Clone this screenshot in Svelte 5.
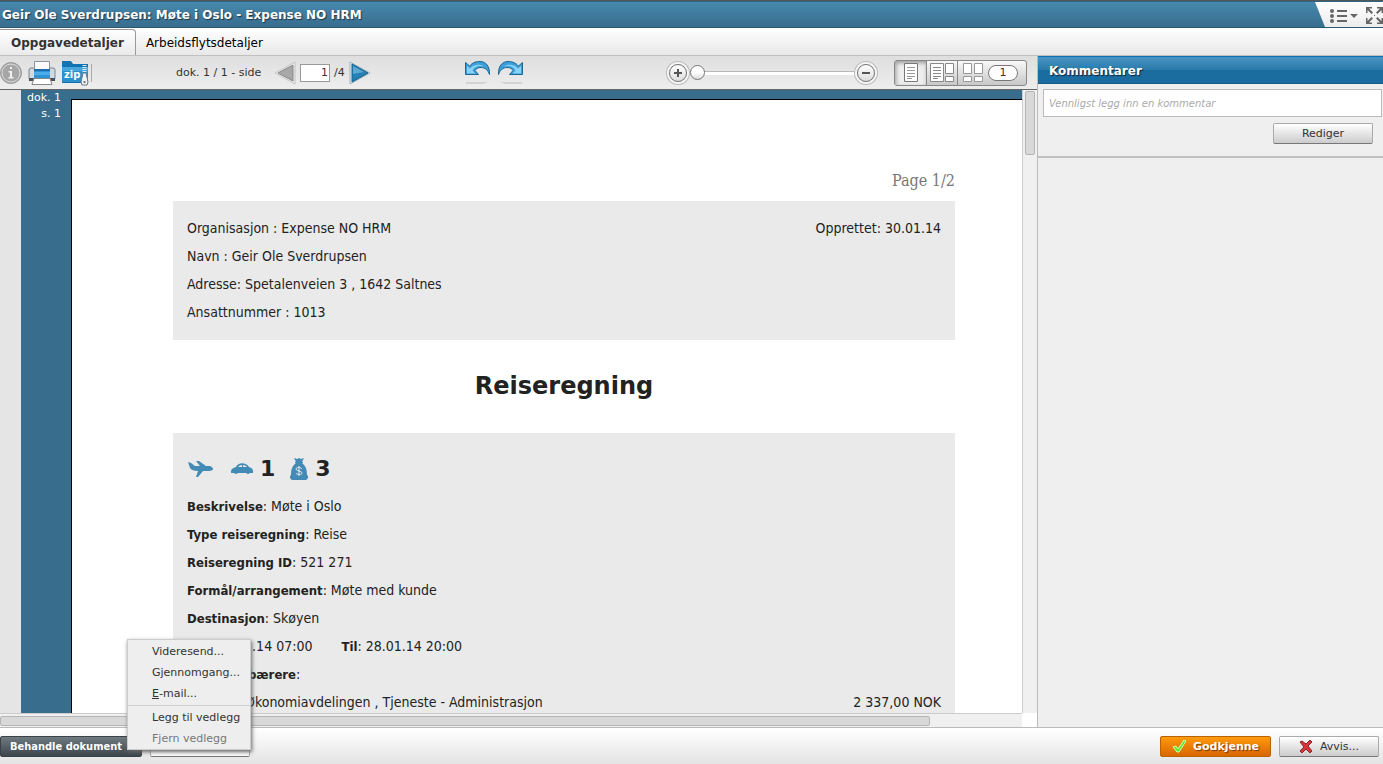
<script lang="ts">
  let page = $state(1);
  let zoom = $state(0);
  let comment = $state("");

  const sender = [
    "Organisasjon : Expense NO HRM",
    "Navn : Geir Ole Sverdrupsen",
    "Adresse: Spetalenveien 3 , 1642 Saltnes",
    "Ansattnummer : 1013",
  ];

  const details = [
    ["Beskrivelse", "Møte i Oslo"],
    ["Type reiseregning", "Reise"],
    ["Reiseregning ID", "521 271"],
    ["Formål/arrangement", "Møte med kunde"],
    ["Destinasjon", "Skøyen"],
  ];
</script>

<div class="app">
  <header class="titlebar">
    <h1>Geir Ole Sverdrupsen: Møte i Oslo - Expense NO HRM</h1>
    <div class="window-tools">
      <button aria-label="Liste">
        <svg width="28" height="16" viewBox="0 0 28 16">
          <g fill="#666">
            <circle cx="2" cy="3" r="2" /><circle cx="2" cy="8" r="2" /><circle cx="2" cy="13" r="2" />
            <path d="M7 2h10v2H7zM7 7h10v2H7zM7 12h10v2H7zM20 6h8l-4 4z" />
          </g>
        </svg>
      </button>
      <button aria-label="Fullskjerm">
        <svg width="17" height="17" viewBox="0 0 17 17" fill="#666">
          <path d="M0 0h6v1.500H3L7 5.500 5.500 7 1.500 3v3H0zM17 0v6h-1.500V3l-4 4L10 5.500l4-4h-3V0zM17 17h-6v-1.500h3l-4-4L11.500 10l4 4v-3H17zM0 17v-6h1.500v3l4-4L7 11.500l-4 4h3V17z" />
          <path d="M8 8h1v1H8z" />
        </svg>
      </button>
    </div>
  </header>

  <nav class="tabs">
    <button class="tab active">Oppgavedetaljer</button>
    <button class="tab">Arbeidsflytsdetaljer</button>
  </nav>

  <main>
    <section class="viewer">
      <div class="toolbar">
        <div class="files">
          <button aria-label="Info">
            <svg width="22" height="24" viewBox="0 0 22 24">
              <circle cx="11" cy="12" r="10.500" fill="#a6a6a6" stroke="#999" />
              <circle cx="11" cy="12" r="9" fill="none" stroke="#ddd" />
              <path d="M10 6h2v2h-2zM8.500 10H12v6h1.500v1.500h-5V16H10v-4.500H8.500z" fill="#f0f0f0" />
            </svg>
          </button>
          <button aria-label="Skriv ut">
            <svg width="28" height="26" viewBox="0 0 28 26">
              <rect x="1" y="8" width="26" height="12" rx="2" fill="#d5d9dc" stroke="#7d868c" />
              <path d="M1 18h26v3H1z" fill="#4a5156" />
              <path d="M6.500 10V1.500h15V10" fill="#fafafa" stroke="#8b959b" />
              <rect x="6" y="9" width="16" height="10" fill="#2b93d6" />
              <path d="M6 9h16v2H6z" fill="#1a6da8" />
              <path d="M6 12h16v3H6z" fill="#4badea" />
              <path d="M6 18.500h16l2 6H4z" fill="#fff" stroke="#888" />
            </svg>
          </button>
          <button aria-label="Last ned zip">
            <svg width="27" height="26" viewBox="0 0 27 26">
              <path d="M0 1h9l2 3h15v19H0z" fill="#1173b1" />
              <path d="M0 7h26v15H0z" fill="#2d8fcb" />
              <path d="M0 7h26v4H0z" fill="#46a5da" />
              <text x="2" y="18" fill="#fff" font-size="10" font-weight="bold" font-family="DejaVu Sans, sans-serif">zip</text>
              <path d="M22.500 5v12" stroke="#dceaf2" stroke-width="4" stroke-dasharray="1 1" />
              <path d="M21 13h3l2 9-1 3h-5l-1-3z" fill="#f5f5f5" stroke="#678" />
              <path d="M21.500 21h2v2h-2z" fill="#678" />
            </svg>
          </button>
          <span class="divider"></span>
        </div>

        <div class="pager">
          <label for="page">dok. 1 / 1 - side</label>
          <button aria-label="Forrige side">
            <svg width="22" height="24" viewBox="0 0 22 24">
              <path d="M1 12L21 1v22z" fill="#eee" stroke="#c4c4c4" />
              <path d="M4 12L19 4v16z" fill="#a8a8a8" stroke="#888" />
            </svg>
          </button>
          <input id="page" type="text" bind:value={page} />
          <span>/4</span>
          <button aria-label="Neste side">
            <svg width="22" height="24" viewBox="0 0 22 24">
              <path d="M21 12L1 1v22z" fill="#eee" stroke="#9bb2bf" />
              <path d="M19 12L3 3v18z" fill="#2581b5" stroke="#12628f" />
              <path d="M4 5l11 6-11 2z" fill="#5caad3" />
            </svg>
          </button>
        </div>

        <div class="history">
          {#each ["Angre", "Gjenta"] as label}
            <button aria-label={label} class:redo={label === "Gjenta"}>
              <svg width="26" height="24" viewBox="0 0 26 24">
                <path
                  d="M.5 1.500l4 3.500C8 1 12 .500 15 .500c6 0 10 5 9.500 13C23 9 20 6.500 16 6.500c-3 0-5 1-6 3l3.500 4H.5z"
                  fill="#3e9fd8"
                  stroke="#1b6795"
                />
                <path d="M2 5l3 2.500c3-4 10-5 14-2-5-1.500-10 0-11.500 4l3 3H2z" fill="#86d4fa" />
                <path d="M1 21h22l-5 2H1z" fill="#d3d3d3" />
              </svg>
            </button>
          {/each}
        </div>

        <div class="zoom">
          <button class="round" aria-label="Zoom inn">
            <svg width="8" height="8" viewBox="0 0 8 8"><path d="M3 0h2v3h3v2H5v3H3V5H0V3h3z" fill="#555" /></svg>
          </button>
          <input type="range" min="0" max="100" bind:value={zoom} aria-label="Zoom" />
          <button class="round" aria-label="Zoom ut">
            <svg width="8" height="8" viewBox="0 0 8 8"><path d="M0 3h8v2H0z" fill="#555" /></svg>
          </button>
        </div>

        <div class="views">
          <button class="pressed" aria-label="Enkel side">
            <svg width="14" height="20" viewBox="0 0 14 20">
              <path d="M.5.500h13v18H.5z" fill="#fff" stroke="#777" />
              <path d="M3 4.500h8M3 7.500h8M3 10.500h8M3 13.500h8M3 15.500h5" stroke="#999" />
            </svg>
          </button>
          <button aria-label="Side og miniatyrer">
            <svg width="24" height="20" viewBox="0 0 24 20" fill="#fff" stroke="#888">
              <path d="M.5.500h13v18H.5zM15.500.500h8v10h-8zM15.500 13.500h8v5h-8z" />
              <path d="M3 4.500h8M3 7.500h8M3 10.500h8M3 13.500h8M3 15.500h5" />
            </svg>
          </button>
          <button aria-label="Miniatyrer">
            <svg width="20" height="20" viewBox="0 0 20 20" fill="#fff" stroke="#999">
              <path d="M.5.500h8v10h-8zM11.500.500h8v10h-8zM.5 13.500h8v5h-8zM11.500 13.500h8v5h-8z" />
            </svg>
          </button>
          <button class="count"><span>1</span></button>
        </div>
      </div>

      <div class="canvas">
        <aside class="pages">
          <div>dok. 1</div>
          <div>s. 1</div>
        </aside>
        <div class="sheet-wrap">
          <article class="sheet">
            <p class="page-no">Page 1/2</p>
            <div class="box sender">
              <div>
                {#each sender as line}
                  <p>{line}</p>
                {/each}
              </div>
              <p>Opprettet: 30.01.14</p>
            </div>
            <h2>Reiseregning</h2>
            <div class="box">
              <div class="summary">
                <svg width="27" height="18" viewBox="0 0 27 18" fill="#438bb5">
                  <path d="M1 2l3 1 4 3h5L9 1h3l7 5h4c2 1 3 2 3 3s-2 2-4 2h-6l-5 6H9l2-6c-4 0-7-1-8-3z" />
                </svg>
                <svg class="car" width="22" height="12" viewBox="0 0 22 12" fill="#438bb5">
                  <path
                    d="M0 8c0-2 2-3 5-4 2-5 10-5 13 0 3 1 4 2 4 4v2H0zM7 4h4V2C9 2 8 3 7 4zM12 2v2h4c-1-1-2-2-4-2z"
                    fill-rule="evenodd"
                  />
                  <circle cx="5" cy="9" r="2" /><circle cx="17" cy="9" r="2" />
                </svg>
                <b>1</b>
                <svg class="bag" width="18" height="22" viewBox="0 0 18 22">
                  <path
                    d="M4 0l3 1 2-1 2 1 3-1-2 4h1v1h-1c4 3 5 7 5 12 2 1 1 4-1 5H2c-2-1-3-4-1-5 0-5 1-9 5-12H5V4h1z"
                    fill="#438bb5"
                  />
                  <path d="M12 11c-1-2-6-2-6 0s6 2 6 4-5 2-6 0M9 8v10" fill="none" stroke="#eaeaea" />
                </svg>
                <b>3</b>
              </div>
              {#each details as [name, value]}
                <p><b>{name}</b>: {value}</p>
              {/each}
              <p class="period">
                <span><b>Fra</b>: 28.01.14 07:00</span>
                <span><b>Til</b>: 28.01.14 20:00</span>
              </p>
              <p><b>Kostnadsbærere</b>:</p>
              <p class="amount">
                <span>Avdeling Økonomiavdelingen , Tjeneste - Administrasjon</span>
                <span>2 337,00 NOK</span>
              </p>
            </div>
          </article>
        </div>
        <div class="vscroll"><span></span></div>
      </div>
      <div class="hscroll"><div><span></span></div></div>
    </section>

    <section class="comments">
      <h3><label for="comment">Kommentarer</label></h3>
      <div class="comment-form">
        <input
          id="comment"
          type="text"
          placeholder="Vennligst legg inn en kommentar"
          bind:value={comment}
        />
        <button class="btn">Rediger</button>
      </div>
    </section>
  </main>

  <footer>
    <button class="btn dark">Behandle dokument</button>
    <button class="btn faded">Kommentarer</button>
    <div class="menu">
      <button>Videresend...</button>
      <button>Gjennomgang...</button>
      <button><u>E</u>-mail...</button>
      <hr />
      <button>Legg til vedlegg</button>
      <button disabled>Fjern vedlegg</button>
    </div>
    <button class="btn approve">
      <svg width="14" height="13" viewBox="0 0 14 13">
        <path d="M1 7l3-1 2 3 6-9 2 1-7 11H5z" fill="#5bee23" stroke="#d6ffbd" />
      </svg>
      Godkjenne
    </button>
    <button class="btn reject">
      <svg width="14" height="13" viewBox="0 0 14 13">
        <path d="M1 2l2-1 4 3 4-4 2 2-4 4 4 5-2 2-4-4-4 4-2-2 4-4z" fill="#d6363b" stroke="#8d2428" />
      </svg>
      Avvis...
    </button>
  </footer>
</div>

<style>
  :global(body) {
    margin: 0;
  }

  .app {
    display: flex;
    flex-direction: column;
    height: 100vh;
    box-sizing: border-box;
    overflow: hidden;
    border-top: 1px solid #555;
    background: #efefef;
    color: #333;
    font-family: "DejaVu Sans", Verdana, sans-serif;
    font-size: 11px;
  }

  button,
  input {
    font: inherit;
    color: inherit;
    box-sizing: border-box;
  }

  button {
    display: flex;
    align-items: center;
    justify-content: center;
    padding: 0;
    border: none;
    background: none;
    white-space: nowrap;
  }

  svg {
    display: block;
    flex: none;
  }

  h1,
  h2,
  h3,
  p {
    margin: 0;
  }

  .titlebar {
    display: flex;
    flex: none;
    align-items: stretch;
    justify-content: space-between;
    height: 27px;
    box-sizing: border-box;
    border-top: 1px solid #2d6787;
    border-bottom: 1px solid #2a5873;
    background: linear-gradient(#4788ae, #386d8d);
  }

  h1 {
    padding-left: 2px;
    font-size: 12px;
    line-height: 26px;
    color: #fff;
    text-shadow: 1px 1px 1px #234;
  }

  .window-tools {
    display: flex;
    align-items: center;
    gap: 8px;
    padding: 2px 0 0 15px;
    background: linear-gradient(#fff, #ececec);
    clip-path: polygon(0 0, 100% 0, 100% 100%, 10px 100%);
  }

  .tabs {
    display: flex;
    flex: none;
    height: 26px;
    align-items: stretch;
    padding-top: 1px;
    border-bottom: 1px solid #c0c0c0;
    background: linear-gradient(#fff, #e8e8e8);
    color: #000;
    font-size: 12px;
  }

  .tab {
    padding: 2px 10px 0;
  }

  .tab.active {
    padding: 1px 11px 0;
    border: 1px solid #999;
    border-width: 1px 1px 0 0;
    border-radius: 0 4px 0 0;
    background: linear-gradient(#fff, #eaeaea);
    color: #333;
    font-weight: bold;
  }

  main {
    display: flex;
    flex: 1;
    min-height: 0;
  }

  .viewer {
    display: flex;
    flex: 1;
    flex-direction: column;
    min-width: 0;
  }

  .toolbar {
    display: flex;
    flex: none;
    align-items: center;
    height: 34px;
    box-sizing: border-box;
    padding-right: 10px;
    border-bottom: 1px solid #666;
    background: linear-gradient(#dedede, #eee);
  }

  .files {
    display: flex;
    align-items: center;
    gap: 6px;
    width: 176px;
  }

  .divider {
    width: 1px;
    height: 18px;
    margin-left: -4px;
    background: #aaa;
  }

  .pager {
    display: flex;
    align-items: center;
    gap: 4px;
  }

  .pager label {
    min-width: 94px;
  }

  .pager input {
    width: 30px;
    height: 18px;
    padding: 0 1px;
    border: 1px solid #999;
    background: #fff;
    text-align: right;
  }

  .history {
    display: flex;
    gap: 6px;
    margin-left: 94px;
  }

  .redo svg {
    transform: scaleX(-1);
  }

  .zoom {
    display: flex;
    align-items: center;
    margin-left: auto;
  }

  .round {
    width: 18px;
    height: 18px;
    margin: 3px;
    border: 1px solid #777;
    border-radius: 50%;
    background: linear-gradient(#fff, #ddd);
    box-shadow: 0 0 0 2px #f5f5f5, 0 0 0 3px #bbb;
  }

  .zoom input {
    appearance: none;
    width: 164px;
    height: 16px;
    margin: 0;
    background: linear-gradient(#b8b8b8, #b8b8b8) 0 6px / 100% 1px no-repeat,
      linear-gradient(#fff, #fff) 0 7px / 100% 3px no-repeat;
  }

  .zoom input::-webkit-slider-thumb {
    appearance: none;
    width: 15px;
    height: 15px;
    border: 1px solid #777;
    border-radius: 50%;
    background: linear-gradient(#fff 50%, #ddd);
  }

  .views {
    display: flex;
    height: 26px;
    box-sizing: border-box;
    margin-left: 16px;
    border: 1px solid #888;
    border-radius: 3px;
    background: linear-gradient(#f8f8f8, #c8c8c8);
  }

  .views button {
    width: 31px;
  }

  .views button + button {
    border-left: 1px solid #888;
  }

  .views .pressed {
    background: #eee;
    box-shadow: inset 1px 2px 4px #999;
  }

  .views button.count {
    width: 38px;
    padding-right: 8px;
    border: none;
  }

  .count span {
    width: 28px;
    height: 14px;
    border: 1px solid #777;
    border-radius: 8px;
    background: #fff;
    line-height: 14px;
  }

  .canvas {
    display: flex;
    flex: 1;
    min-height: 0;
    padding-left: 21px;
    background: #e5e5e5;
  }

  .pages {
    flex: none;
    width: 50px;
    box-sizing: border-box;
    padding-right: 10px;
    background: #386d8d;
    color: #fff;
    line-height: 16px;
    text-align: right;
  }

  .sheet-wrap {
    flex: 1;
    min-width: 0;
    padding-top: 9px;
    overflow: hidden;
    background: #386d8d;
  }

  .sheet {
    height: 1200px;
    box-sizing: border-box;
    padding: 66px 67px 0 101px;
    border-top: 1px solid #000;
    border-left: 1px solid #000;
    background: #fff;
    color: #222;
    font-family: "DejaVu Sans Condensed", "DejaVu Sans", sans-serif;
    font-size: 14px;
    font-stretch: condensed;
    line-height: 28px;
    white-space: nowrap;
  }

  .sheet p b {
    font-size: 13px;
    line-height: 1;
  }

  .page-no {
    height: 35px;
    color: #777;
    font-family: "DejaVu Serif Condensed", "DejaVu Serif", serif;
    font-size: 16px;
    line-height: 30px;
    text-align: right;
  }

  .box {
    padding: 13px 14px 14px;
    background: #eaeaea;
  }

  .sender {
    display: flex;
    justify-content: space-between;
  }

  h2 {
    font-family: "DejaVu Sans", sans-serif;
    font-size: 24px;
    font-stretch: normal;
    line-height: 93px;
    text-align: center;
  }

  .summary {
    display: flex;
    align-items: center;
    height: 46px;
    font-family: "DejaVu Sans", sans-serif;
    font-size: 22px;
    font-stretch: normal;
  }

  .car {
    margin: 0 7px 0 17px;
  }

  .bag {
    margin: 0 7px 0 15px;
  }

  .period {
    display: flex;
    gap: 29px;
  }

  .amount {
    display: flex;
    justify-content: space-between;
  }

  .vscroll {
    flex: none;
    width: 15px;
    box-sizing: border-box;
    padding: 1px 2px;
    border-left: 1px solid #ccc;
    background: #f0f0f0;
  }

  .vscroll span,
  .hscroll span {
    display: block;
    box-sizing: border-box;
    border: 1px solid #b5b5b5;
    border-radius: 2px;
    background: #d8d8d8;
  }

  .vscroll span {
    height: 64px;
  }

  .hscroll {
    flex: none;
    padding-right: 15px;
    background: #fff;
  }

  .hscroll div {
    height: 14px;
    box-sizing: border-box;
    padding: 2px 0;
    border-top: 1px solid #ccc;
    background: #f0f0f0;
  }

  .hscroll span {
    width: 91%;
    height: 10px;
  }

  .comments {
    flex: none;
    width: 346px;
    box-sizing: border-box;
    border-left: 1px solid #bbb;
  }

  h3 {
    height: 28px;
    box-sizing: border-box;
    padding-left: 11px;
    border-top: 1px solid #0c70b4;
    border-bottom: 1px solid #145a86;
    background: linear-gradient(#4a94c4, #287aaa 50%, #1b6c9f 50%, #1b6c9f);
    color: #fff;
    font-size: 12px;
    line-height: 28px;
    text-shadow: 1px 1px 1px #123;
  }

  .comment-form {
    display: flex;
    flex-direction: column;
    align-items: flex-end;
    gap: 6px;
    padding: 5px 1px 12px 5px;
    border-bottom: 2px solid #c0c0c0;
  }

  .comment-form input {
    width: 100%;
    height: 28px;
    padding: 0 5px;
    border: 1px solid #bbb;
    background: #fff;
  }

  .comment-form input::placeholder {
    color: #aaa;
    font-size: 10px;
    font-style: italic;
  }

  .comment-form .btn {
    margin-right: 9px;
  }

  .btn {
    width: 100px;
    height: 21px;
    gap: 7px;
    border: 1px solid #aaa;
    border-bottom-color: #777;
    border-radius: 2px;
    background: linear-gradient(#fff, #ccc);
  }

  footer {
    position: relative;
    display: flex;
    flex: none;
    height: 37px;
    box-sizing: border-box;
    padding: 8px 4px 0 0;
    border-top: 1px solid #bbb;
    background: linear-gradient(#fff, #e4e4e4);
  }

  .dark {
    width: 142px;
    justify-content: flex-start;
    padding-left: 9px;
    border-color: #3a4247;
    background: linear-gradient(#6e7a80, #3c464c);
    color: #fff;
    font-family: "DejaVu Sans Condensed", "DejaVu Sans", sans-serif;
    font-stretch: condensed;
    font-weight: bold;
  }

  .faded {
    margin-left: 8px;
    background: #fff;
  }

  .approve {
    width: 111px;
    margin-left: auto;
    border-color: #b96300;
    background: linear-gradient(#ff9a0c, #d96600);
    color: #fff;
    font-weight: bold;
    text-shadow: 1px 1px 1px #753800;
  }

  .reject {
    margin-left: 8px;
  }

  .menu {
    position: absolute;
    bottom: 14px;
    left: 127px;
    width: 124px;
    box-sizing: border-box;
    padding: 1px 0 0;
    border: 1px solid #ccc;
    background: #eee;
    box-shadow: 1px 2px 4px #666;
  }

  .menu button {
    height: 21px;
    padding-left: 24px;
  }

  .menu button:disabled {
    color: #777;
  }

  .menu hr {
    height: 1px;
    margin: 1px 0;
    border: none;
    background: #d0d0d0;
  }
</style>
